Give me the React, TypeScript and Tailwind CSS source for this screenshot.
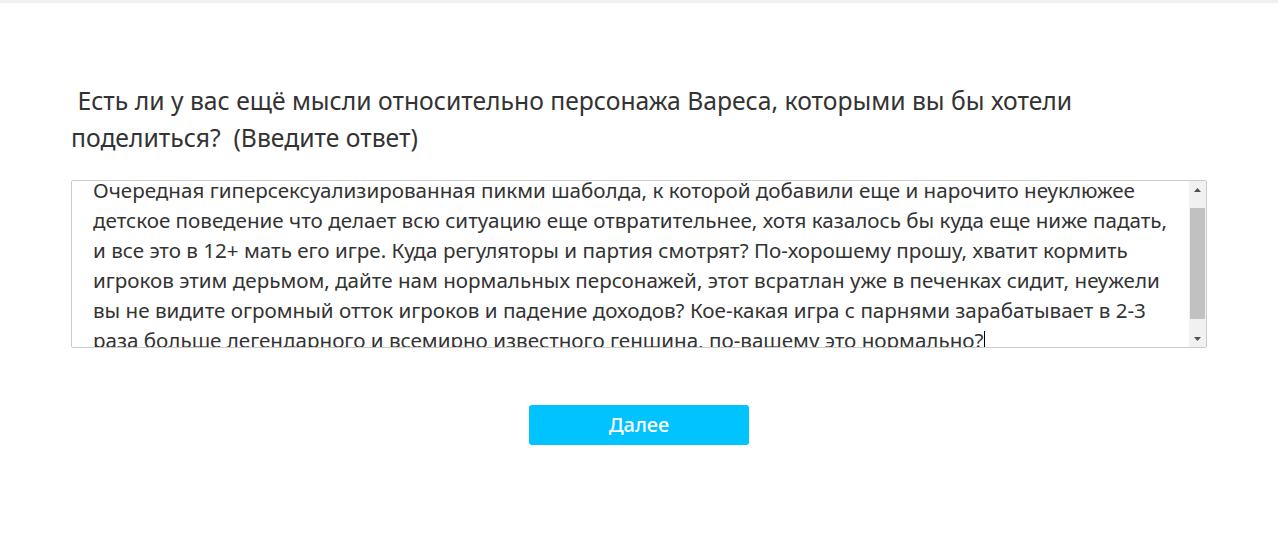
import React from "react";

const lines = [
  "Очередная гиперсексуализированная пикми шаболда, к которой добавили еще и нарочито неуклюжее",
  "детское поведение что делает всю ситуацию еще отвратительнее, хотя казалось бы куда еще ниже падать,",
  "и все это в 12+ мать его игре. Куда регуляторы и партия смотрят? По-хорошему прошу, хватит кормить",
  "игроков этим дерьмом, дайте нам нормальных персонажей, этот всратлан уже в печенках сидит, неужели",
  "вы не видите огромный отток игроков и падение доходов? Кое-какая игра с парнями зарабатывает в 2-3",
  "раза больше легендарного и всемирно известного геншина, по-вашему это нормально?",
];

export default function App() {
  return (
    <div
      className="w-[1278px] h-[554px] bg-white overflow-hidden"
      style={{ fontFamily: '"Noto Sans", "Open Sans", sans-serif' }}
    >
      <div className="h-[3px] bg-[#f0f0f0]" />
      <div className="px-[71px] pt-[79px]">
        <div className="text-[24.7px] leading-[37px] text-[#333333] whitespace-nowrap">
          &nbsp;Есть ли у вас ещё мысли относительно персонажа Вареса, которыми вы бы хотели
          <br />
          поделиться?&nbsp; (Введите ответ)
        </div>
        <div className="mt-[24px] h-[168px] border border-[#cccccc] rounded-[2px] flex overflow-hidden">
          <div className="flex-1 overflow-hidden pl-[21px]">
            <div className="-mt-[6px] text-[20.6px] leading-[30px] text-[#333333]">
              {lines.map((l, i) => (
                <div key={i} className="whitespace-nowrap">
                  {l}
                  {i === lines.length - 1 && (
                    <span className="inline-block w-px h-[21px] bg-black align-[-4px]" />
                  )}
                </div>
              ))}
            </div>
          </div>
          <div className="w-[17px] bg-[#f1f1f1] flex flex-col items-center">
            <div className="h-[17px] w-full flex items-center justify-center">
              <svg width="7" height="4" viewBox="0 0 7 4">
                <polygon points="0,4 3.5,0 7,4" fill="#505050" />
              </svg>
            </div>
            <div className="mt-[10px] w-[15px] h-[111px] bg-[#c1c1c1]" />
            <div className="flex-1" />
            <div className="h-[17px] w-full flex items-center justify-center">
              <svg width="7" height="4" viewBox="0 0 7 4">
                <polygon points="0,0 3.5,4 7,0" fill="#505050" />
              </svg>
            </div>
          </div>
        </div>
        <div className="flex justify-center mt-[57px]">
          <button className="w-[220px] h-[40px] rounded-[3px] bg-[#00c3ff] text-white text-[20px] font-medium leading-none">
            Далее
          </button>
        </div>
      </div>
    </div>
  );
}
